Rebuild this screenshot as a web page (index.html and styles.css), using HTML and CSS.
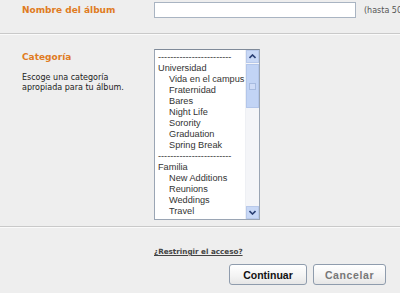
FILE: index.html
```html
<!DOCTYPE html>
<html lang="es">
<head>
  <meta charset="UTF-8">
  <title>Crear álbum</title>
  <link rel="stylesheet" href="styles.css">
</head>
<body>
  <div class="album-form">
    <!-- Nombre del álbum -->
    <div class="form-row name-row">
      <div class="form-label">
        <h3>Nombre del álbum</h3>
      </div>
      <input type="text" class="name-input">
      <span class="hint">(hasta 50</span>
    </div>

    <!-- Categoría -->
    <div class="form-row category-row">
      <div class="form-label">
        <h3>Categoría</h3>
        <p>Escoge una categoría apropiada para tu álbum.</p>
      </div>
      <div class="listbox">
        <ul class="options">
          <li>------------------------</li>
          <li>Universidad</li>
          <li class="sub">Vida en el campus</li>
          <li class="sub">Fraternidad</li>
          <li class="sub">Bares</li>
          <li class="sub">Night Life</li>
          <li class="sub">Sorority</li>
          <li class="sub">Graduation</li>
          <li class="sub">Spring Break</li>
          <li>------------------------</li>
          <li>Familia</li>
          <li class="sub">New Additions</li>
          <li class="sub">Reunions</li>
          <li class="sub">Weddings</li>
          <li class="sub">Travel</li>
        </ul>
        <div class="scrollbar">
          <div class="arrow">
            <svg width="7" height="5" viewBox="0 0 7 5"><path d="M0.5 4 L3.5 1 L6.5 4" fill="none" stroke="#2a3f73" stroke-width="1.6"/></svg>
          </div>
          <div class="track"><div class="thumb"><span class="grip"></span></div></div>
          <div class="arrow">
            <svg width="7" height="5" viewBox="0 0 7 5"><path d="M0.5 1 L3.5 4 L6.5 1" fill="none" stroke="#2a3f73" stroke-width="1.6"/></svg>
          </div>
        </div>
      </div>
    </div>

    <!-- Acciones -->
    <div class="form-footer">
      <a href="#" class="restrict-link">¿Restringir el acceso?</a>
      <div class="buttons">
        <button class="btn primary">Continuar</button>
        <button class="btn secondary">Cancelar</button>
      </div>
    </div>
  </div>
</body>
</html>
```

FILE: styles.css
```css
/* Formulario de álbum */
body {
  margin: 0;
  background: #eeeeee;
  font-family: "DejaVu Sans", Verdana, sans-serif;
  color: #222;
  overflow: hidden;
}
.album-form {
  width: 400px;
}
.form-row {
  display: flex;
  border-bottom: 1px solid #c9c9c9;
  box-shadow: 0 1px 0 #fafafa;
}
.form-label {
  width: 132px;
  padding-left: 22px;
  flex-shrink: 0;
}
.form-label h3 {
  margin: 0;
  font-size: 9px;
  font-weight: bold;
  color: #e07b22;
}
.form-label p {
  width: 116px;
  margin: 11px 0 0;
  font-size: 8px;
  line-height: 10px;
  color: #222;
}
/* Fila del nombre */
.name-row {
  height: 33px;
  align-items: flex-start;
}
.name-row .form-label {
  padding-top: 5px;
}
.name-input {
  box-sizing: border-box;
  width: 202px;
  height: 16px;
  margin-top: 2px;
  border: 1px solid #a9b4c2;
  background: #fff;
  padding: 0;
  flex-shrink: 0;
}
.hint {
  margin: 6px 0 0 8px;
  font-size: 8px;
  color: #555;
  white-space: nowrap;
}
/* Fila de categoría */
.category-row {
  height: 193px;
  padding-top: 15px;
  box-sizing: border-box;
}
.category-row .form-label {
  padding-top: 3px;
}
.listbox {
  display: flex;
  width: 106px;
  height: 171px;
  border: 1px solid #9aa5b4;
  border-top-color: #7f8a99;
  background: #fff;
  box-sizing: border-box;
  align-self: flex-start;
}
.options {
  list-style: none;
  margin: 0;
  padding: 2px 0 0 3px;
  flex: 1;
  overflow: hidden;
  font-family: "Liberation Sans", Arial, sans-serif;
  font-size: 9.2px;
  line-height: 11px;
  color: #333;
  white-space: nowrap;
}
.options .sub {
  padding-left: 11px;
}
.scrollbar {
  width: 13px;
  display: flex;
  flex-direction: column;
  background: #f4f5f8;
  border-left: 1px solid #eef0f4;
}
.arrow {
  height: 13px;
  display: flex;
  align-items: center;
  justify-content: center;
  background: #c8d8f6;
  border: 1px solid #b8c9ea;
  box-sizing: border-box;
}
.track {
  flex: 1;
  padding-top: 1px;
}
.thumb {
  height: 42px;
  background: #c2d4f5;
  border: 1px solid #b3c6ea;
  display: flex;
  align-items: center;
  justify-content: center;
}
.grip {
  width: 5px;
  height: 5px;
  border: 1px solid #a7bbe0;
  background: #cfdcf7;
}
/* Pie con acciones */
.form-footer {
  padding: 20px 14px 0 154px;
  display: flex;
  flex-direction: column;
  align-items: flex-start;
}
.restrict-link {
  font-size: 7.2px;
  font-weight: bold;
  color: #444;
  text-decoration: underline;
}
.buttons {
  align-self: stretch;
  display: flex;
  justify-content: flex-end;
  gap: 6px;
  margin-top: 8px;
}
.btn {
  height: 21px;
  padding: 0;
  border: 1px solid #8f9cad;
  border-radius: 3px;
  background: linear-gradient(to bottom, #ffffff, #f3f3f3 60%, #e6e6e6);
  font-family: "Liberation Sans", Arial, sans-serif;
  font-size: 10.5px;
  font-weight: bold;
  cursor: pointer;
}
.btn.primary {
  width: 78px;
  color: #111;
}
.btn.secondary {
  width: 73px;
  color: #777;
  letter-spacing: 0.6px;
}
```
